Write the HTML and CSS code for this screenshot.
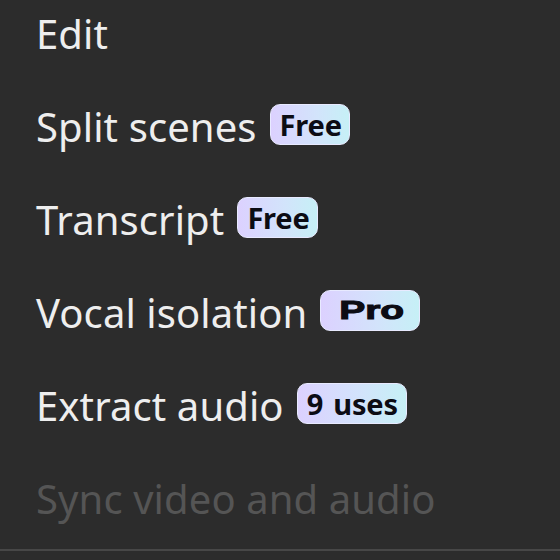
FILE: index.html
```html
<!DOCTYPE html>
<html>
<head>
<meta charset="utf-8">
<link rel="stylesheet" href="styles.css">
</head>
<body>
<ul class="menu">
  <li class="item"><span class="label">Edit</span></li>
  <li class="item"><span class="label">Split scenes</span><span class="badge">Free</span></li>
  <li class="item"><span class="label">Transcript</span><span class="badge">Free</span></li>
  <li class="item"><span class="label">Vocal isolation</span><span class="badge badge-pro"><span class="pro-text">Pro</span></span></li>
  <li class="item"><span class="label">Extract audio</span><span class="badge badge-uses">9 uses</span></li>
  <li class="item disabled"><span class="label">Sync video and audio</span></li>
</ul>
<div class="separator"></div>
</body>
</html>
```
FILE: styles.css
```css
html, body {
  margin: 0;
  padding: 0;
  background: #2c2c2c;
  width: 560px;
  height: 560px;
  overflow: hidden;
}
.menu {
  list-style: none;
  margin: 0;
  padding: 0 0 0 36px;
  font-family: "Noto Sans", "Open Sans", sans-serif;
}
.item {
  display: flex;
  align-items: center;
  height: 93px;
  color: #eeeeee;
  font-size: 40px;
  letter-spacing: 0.1px;
}
.item:first-child {
  margin-top: -13px;
}
.label {
  white-space: nowrap;
}
.disabled {
  color: #555555;
}
.badge {
  margin-left: 13px;
  margin-bottom: 4px;
  height: 41px;
  box-sizing: border-box;
  padding: 0 7px 0 9px;
  border-radius: 10px;
  background: linear-gradient(90deg, #dcd1ff 0%, #d2e4fb 60%, #c6f0f6 100%);
  border: 1px solid #e8eaff;
  color: #0c0c14;
  font-family: "Noto Sans", sans-serif;
  font-weight: 700;
  font-size: 29px;
  display: flex;
  align-items: center;
  letter-spacing: -0.2px;
  white-space: pre;
}
.badge-uses {
  word-spacing: 3px;
  padding: 0 8px 0 9px;
}
.badge-pro {
  width: 100px;
  justify-content: center;
}
.pro-text {
  display: inline-block;
  font-family: "Liberation Sans", sans-serif;
  font-weight: 700;
  font-size: 26px;
  transform: scaleX(1.5);
  -webkit-text-stroke: 1px #0c0c14;
  letter-spacing: 0;
}
.separator {
  position: absolute;
  left: 0;
  top: 549px;
  width: 560px;
  height: 2px;
  background: #474747;
}
```
